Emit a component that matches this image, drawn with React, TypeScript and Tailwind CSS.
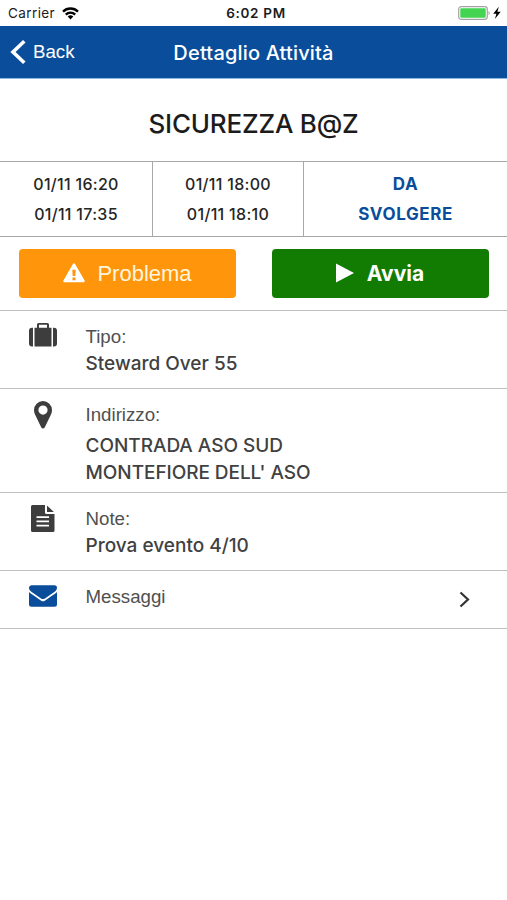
import { type ReactNode } from 'react';

const WifiIcon = () => (
  <svg className="ml-[7px] h-[13px] w-[17px]" viewBox="0 0 17 13" fill="none" stroke="#000" strokeWidth="2.3">
    <path d="M1 4.6a10.6 10.6 0 0 1 15 0" />
    <path d="M3.8 7.6a6.6 6.6 0 0 1 9.4 0" />
    <path d="M8.5 12.4 5.7 9.6a4 4 0 0 1 5.6 0z" fill="#000" stroke="none" />
  </svg>
);

const BatteryIcon = () => (
  <svg className="h-[14px] w-[44px]" viewBox="0 0 44 14">
    <rect x="0.7" y="0.7" width="28.6" height="12.6" rx="2.5" fill="#fff" stroke="#a3a3a3" strokeWidth="1.2" />
    <rect x="2.3" y="2.3" width="25.4" height="9.4" rx="1" fill="#43d551" />
    <path d="M30.5 5v4c1.6-.6 1.6-3.4 0-4z" fill="#a3a3a3" />
    <path d="M40.8 .8 35.2 7.7h3.2l-1.5 5.3 5.800-7.200h-3.300z" fill="#000" />
  </svg>
);

const SuitcaseIcon = () => (
  <svg className="h-[24px] w-[28px]" viewBox="0 0 28 24" fill="#3d3d3d">
    <path d="M4 4.7v18.8H3a3 3 0 0 1-3-3V7.7a3 3 0 0 1 3-3zM24 4.7v18.8h1a3 3 0 0 0 3-3V7.7a3 3 0 0 0-3-3z" />
    <path
      fillRule="evenodd"
      d="M5.5 4.7H8V1.5A1.5 1.5 0 0 1 9.5 0h9A1.5 1.5 0 0 1 20 1.5v3.2h2.5v18.8h-17zM10 4.7h8V1.7h-8z"
    />
  </svg>
);

const PinIcon = () => (
  <svg className="h-[28px] w-[18px]" viewBox="0 0 18 28" fill="#3d3d3d">
    <path
      fillRule="evenodd"
      d="M9 0a9 9 0 0 1 9 9c0 1.5-.3 2.9-.9 4.2l-6.4 13.3c-.7 1.4-2.7 1.4-3.4 0L.9 13.2C.3 11.9 0 10.5 0 9a9 9 0 0 1 9-9zm0 4.500a4.600 4.600 0 1 0 0 9.200 4.600 4.600 0 0 0 0-9.200z"
    />
  </svg>
);

const FileIcon = () => (
  <svg className="h-[27px] w-[24px]" viewBox="0 0 24 27" fill="#3d3d3d">
    <path
      fillRule="evenodd"
      d="M1.5 0H14v7.5A1.5 1.5 0 0 0 15.5 9H23.5v16.5A1.5 1.5 0 0 1 22 27H1.5A1.5 1.5 0 0 1 0 25.5v-24A1.5 1.5 0 0 1 1.5 0zM5.5 11.3v1.8h12.5v-1.8zM5.5 15.4v1.8h12.5v-1.8zM5.5 19.7v1.8h12.5v-1.8z"
    />
    <path d="M16 .8c.4.2.7.5 1 .8l4.9 4.3c.3.3.6.7.8 1.1H16z" />
  </svg>
);

const MailIcon = () => (
  <svg className="mt-[2px] h-[22px] w-[28px]" viewBox="0 0 28 22" fill="#0a4e9b">
    <path d="M0 7.1c.5.5 1 1 1.700 1.400 3 2 6 4 9 6.300 1 .8 2 1.500 3.300 1.500s2.300-.7 3.300-1.500c3-2.200 6-4.200 9-6.300.7-.4 1.200-.9 1.700-1.400v12.200a2.500 2.500 0 0 1-2.500 2.500h-23A2.500 2.500 0 0 1 0 19.300z" />
    <path d="M2.5.2h23A2.5 2.5 0 0 1 28 2.7c0 1.800-1.300 3.300-2.700 4.200l-8.300 5.800c-.9.600-1.900 1.400-3 1.400s-2.100-.8-3-1.400L2.700 6.900C1.300 6 0 4.500 0 2.900A2.600 2.600 0 0 1 2.500.2z" />
  </svg>
);

const WarningIcon = () => (
  <svg className="h-[21px] w-[22px]" viewBox="0 0 22 21">
    <path
      d="M11 1.5 20.5 18H1.5z"
      fill="#fff"
      stroke="#fff"
      strokeWidth="2.5"
      strokeLinejoin="round"
    />
    <path d="M9.3 6.7h3.4l-.4 6.2H9.7zM9.5 14.4h3v2.8h-3z" fill="#ff950a" />
  </svg>
);

type DetailRowProps = {
  icon: ReactNode;
  label: string;
  className: string;
  children?: ReactNode;
};

function DetailRow({ icon, label, className, children }: DetailRowProps) {
  return (
    <section className={`flex border-b-[1.5px] border-[#c0c0c0] ${className}`}>
      <div className="flex w-[85.5px] shrink-0 justify-center self-start pt-3">{icon}</div>
      <div className="flex-1 pt-[15px] font-['Inter',sans-serif] text-[19px] leading-[27px] font-medium text-[#414141]">
        <div className="mb-[2px] font-['Liberation_Sans',sans-serif] text-[18.7px] leading-[22px] font-normal text-[#505050]">
          {label}
        </div>
        {children}
      </div>
    </section>
  );
}

const slots = [
  ['01/11 16:20', '01/11 17:35'],
  ['01/11 18:00', '01/11 18:10'],
];

export default function App() {
  return (
    <div className="min-h-screen w-full bg-white font-['Inter',sans-serif]">
      <div className="grid h-[26px] grid-cols-3 items-center pr-[5px] pl-2 text-[13.5px] text-[#1c1c1c]">
        <div className="flex items-center pt-px">
          <span className="tracking-[0.4px]">Carrier</span>
          <WifiIcon />
        </div>
        <div className="pt-px pl-[2px] text-center font-semibold tracking-[0.7px]">6:02 PM</div>
        <div className="flex justify-end">
          <BatteryIcon />
        </div>
      </div>

      <header className="grid h-[53px] grid-cols-[1fr_auto_1fr] items-center border-b border-[#8db6e0] bg-[#0a4e9b] text-white">
        <div className="flex items-center pl-[10px] font-['Liberation_Sans',sans-serif] text-[18.7px]">
          <svg className="mr-[7px] h-[24px] w-[16px]" viewBox="0 0 16 24" fill="none" stroke="#fff" strokeWidth="3.6">
            <path d="M14.3 1.3 3 12l11.3 10.7" />
          </svg>
          Back
        </div>
        <h1 className="pt-px text-[20px] font-medium tracking-[0.17px]">Dettaglio Attività</h1>
        <div />
      </header>

      <h2 className="flex h-[82px] items-center justify-center pt-[6px] text-[26px] font-medium tracking-[-0.2px] text-[#1c1c1c]">
        SICUREZZA B@Z
      </h2>

      <div className="grid h-[76px] grid-cols-[153px_151px_1fr] border-y border-[#a8a8a8] text-center text-[16px] leading-[30px] font-medium tracking-[0.3px] text-[#252525]">
        {slots.map(([start, end]) => (
          <div key={start} className="border-r border-[#a8a8a8] pt-[7px]">
            <div>{start}</div>
            <div>{end}</div>
          </div>
        ))}
        <div className="pt-[7px] text-[17px] font-bold tracking-[0.6px] text-[#0a4e9b]">
          <div>DA</div>
          <div>SVOLGERE</div>
        </div>
      </div>

      <div className="grid h-[74px] grid-cols-2 gap-9 border-b-[1.5px] border-[#c0c0c0] pt-3 pr-[18px] pl-[19px]">
        <button className="flex h-[49px] items-center justify-center rounded-[4px] bg-[#ff950a] font-['Liberation_Sans',sans-serif] text-[22px] text-[#fff5dc]">
          <WarningIcon />
          <span className="ml-3">Problema</span>
        </button>
        <button className="flex h-[49px] items-center justify-center rounded-[4px] bg-[#127b02] pr-px text-[21px] font-bold text-white">
          <svg className="mr-[13px] mb-[2px] h-[20px] w-[18px]" viewBox="0 0 18 20" fill="#fff">
            <path d="M0 .5 18 10 0 19.5z" />
          </svg>
          Avvia
        </button>
      </div>

      <DetailRow icon={<SuitcaseIcon />} label="Tipo:" className="h-[78px]">
        <div>Steward Over 55</div>
      </DetailRow>
      <DetailRow icon={<PinIcon />} label="Indirizzo:" className="h-[104px]">
        <div className="pt-[4px] tracking-[-0.03px]">CONTRADA ASO SUD</div>
        <div className="tracking-[-0.05px]">MONTEFIORE DELL' ASO</div>
      </DetailRow>
      <DetailRow icon={<FileIcon />} label="Note:" className="h-[78px]">
        <div>Prova evento 4/10</div>
      </DetailRow>
      <div className="relative">
        <DetailRow icon={<MailIcon />} label="Messaggi" className="h-[58px]" />
        <svg
          className="absolute top-[20px] right-[37px] h-[17px] w-[11px]"
          viewBox="0 0 11 17"
          fill="none"
          stroke="#333"
          strokeWidth="2.2"
        >
          <path d="M1.5 1.5 9 8.5l-7.5 7" />
        </svg>
      </div>
    </div>
  );
}
